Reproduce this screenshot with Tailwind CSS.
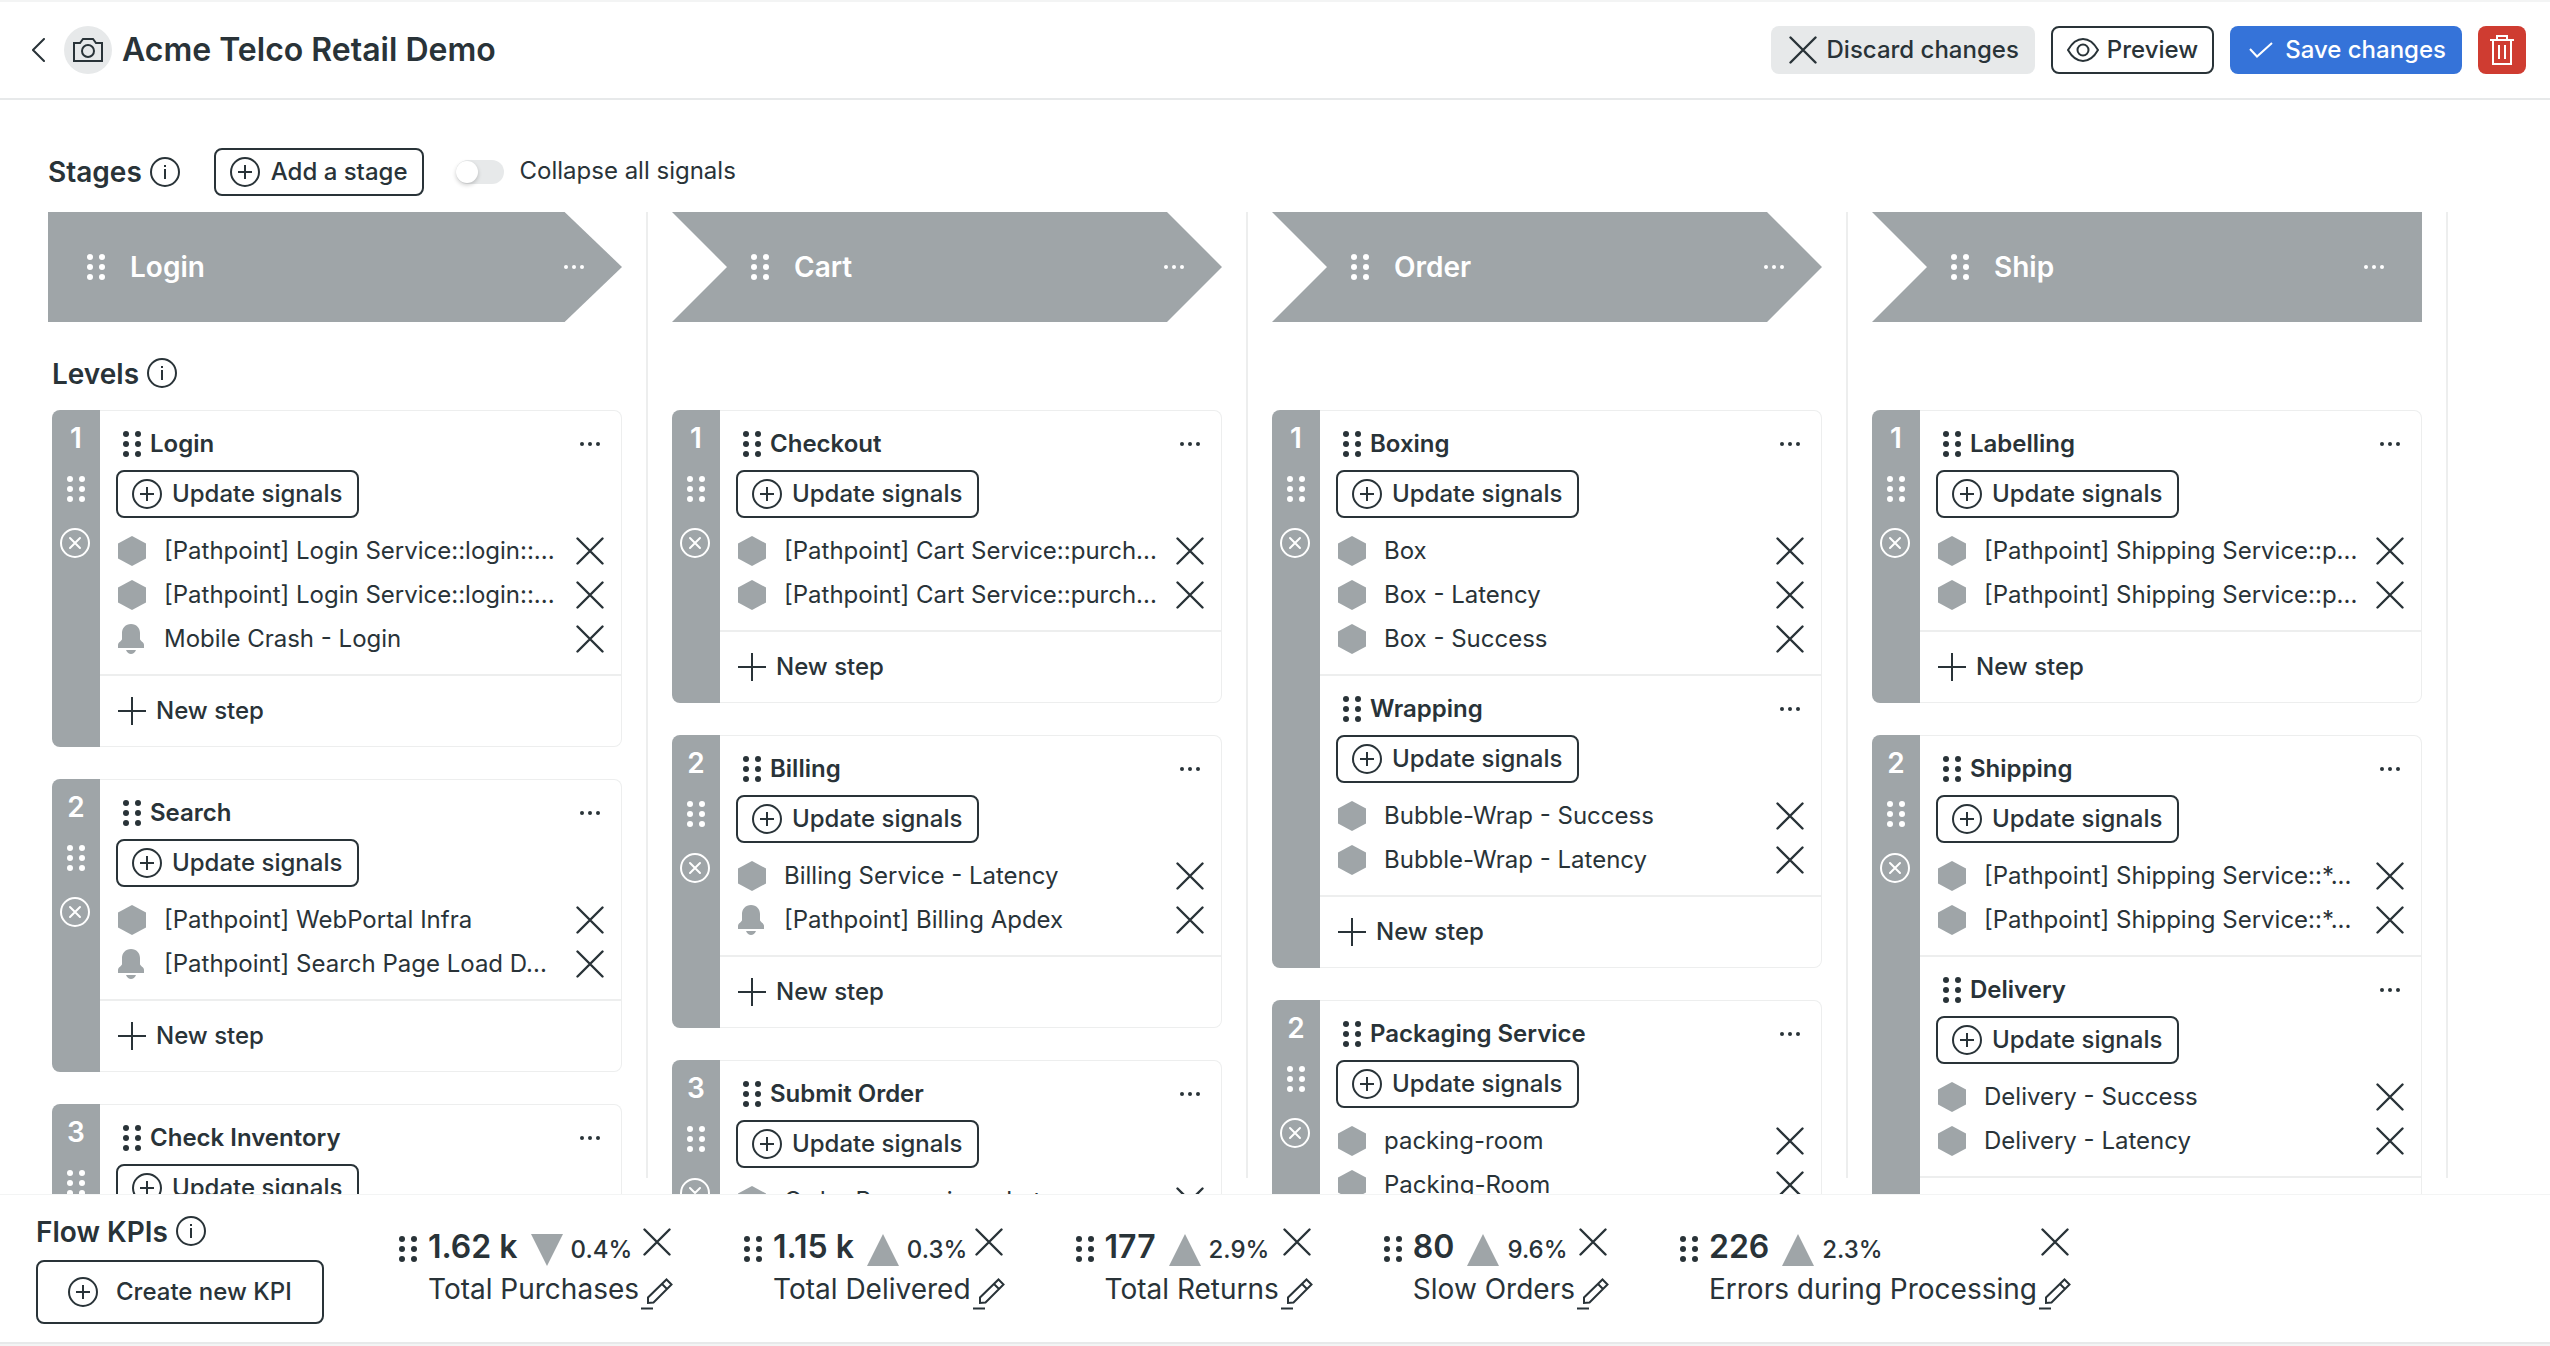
<!DOCTYPE html>
<html lang="en">
<head>
<meta charset="utf-8">
<title>Acme Telco Retail Demo</title>
<script src="https://cdn.jsdelivr.net/npm/@tailwindcss/browser@4"></script>
</head>
<body class="flex h-screen flex-col overflow-hidden bg-white font-['Inter',sans-serif] text-2xl text-[#293338]">

<svg class="hidden" aria-hidden="true">
  <symbol id="drag" viewBox="0 0 18 26"><g fill="currentColor"><circle cx="3" cy="3" r="3"/><circle cx="15" cy="3" r="3"/><circle cx="3" cy="13" r="3"/><circle cx="15" cy="13" r="3"/><circle cx="3" cy="23" r="3"/><circle cx="15" cy="23" r="3"/></g></symbol>
  <symbol id="more" viewBox="0 0 20 4"><g fill="currentColor"><circle cx="2" cy="2" r="2"/><circle cx="10" cy="2" r="2"/><circle cx="18" cy="2" r="2"/></g></symbol>
  <symbol id="plus-circle" viewBox="0 0 30 30"><g fill="none" stroke="currentColor" stroke-width="2"><circle cx="15" cy="15" r="14"/><path d="M15 8v14M8 15h14"/></g></symbol>
  <symbol id="x-circle" viewBox="0 0 30 30"><g fill="none" stroke="currentColor" stroke-width="2"><circle cx="15" cy="15" r="14"/><path d="M10 10l10 10M20 10L10 20" stroke-linecap="round"/></g></symbol>
  <symbol id="info" viewBox="0 0 30 30"><circle cx="15" cy="15" r="14" fill="none" stroke="currentColor" stroke-width="2"/><path d="M14 12h2v10h-2zM14 8h2v2h-2z" fill="currentColor"/></symbol>
  <symbol id="x" viewBox="0 0 28 28"><path d="M1.500 1.500l25 25M26.500 1.500l-25 25" fill="none" stroke="currentColor" stroke-width="2.400" stroke-linecap="round"/></symbol>
  <symbol id="plus" viewBox="0 0 28 28"><path d="M14 0v28M0 14h28" fill="none" stroke="currentColor" stroke-width="2"/></symbol>
  <symbol id="hexagon" viewBox="0 0 28 30"><path d="M14 0l14 7.500v15L14 30 0 22.500v-15z" fill="currentColor"/></symbol>
  <symbol id="bell" viewBox="0 0 28 30"><path d="M13 0c5.500 0 9 4 9 9v6c0 2 4 3 4 6v3H0v-3c0-3 4-4 4-6V9c0-5 3.500-9 9-9zM8 26h10c-1 2.600-3 4-5 4s-4-1.400-5-4z" fill="currentColor"/></symbol>
  <symbol id="pencil" viewBox="0 0 32 33"><path d="M7 25v-5.500L25.500 1.500l5 5L12.500 24.500zM21 6l5 5M0 30.500h12" fill="none" stroke="currentColor" stroke-width="2"/></symbol>
  <symbol id="up" viewBox="0 0 32 32"><path d="M16 0l16 32H0z" fill="currentColor"/></symbol>
  <symbol id="down" viewBox="0 0 32 32"><path d="M0 0h32L16 32z" fill="currentColor"/></symbol>
</svg>

<header class="flex h-[100px] shrink-0 items-center border-y-2 border-t-[#f3f4f4] border-b-[#e7e9ea] pr-6 pl-8">
  <a href="#" aria-label="Back" class="mr-[19px]"><svg class="h-6 w-[13px]" viewBox="0 0 13 24" fill="none" stroke="currentColor" stroke-width="2" stroke-linecap="round"><path d="M12 1L1 12l11 11"/></svg></a>
  <button aria-label="Change image" class="mr-2.5 flex size-12 items-center justify-center rounded-full bg-[#e7e9ea]">
    <svg class="h-6 w-[30px]" viewBox="0 0 30 24" fill="none" stroke="currentColor" stroke-width="2"><path d="M1 5h6l3-4h10l3 4h6v18H1z"/><circle cx="15" cy="13" r="6"/></svg>
  </button>
  <h1 class="text-[32px] leading-10 font-semibold">Acme Telco Retail Demo</h1>
  <div class="ml-auto flex gap-4">
    <button class="flex h-12 items-center gap-2.5 rounded-lg bg-[#e7e9ea] pr-4 pl-[18px] font-medium"><svg class="size-7"><use href="#x"/></svg>Discard changes</button>
    <button class="flex h-12 items-center gap-2 rounded-lg border-2 border-[#293338] px-3.5 font-medium"><svg class="h-6 w-8" viewBox="0 0 32 24" fill="none" stroke="currentColor" stroke-width="2"><path d="M1 12C5 5 10 1 16 1s11 4 15 11c-4 7-9 11-15 11S5 19 1 12z"/><circle cx="16" cy="12" r="5.500"/></svg>Preview</button>
    <button class="flex h-12 items-center gap-3 rounded-lg bg-[#3573d9] pr-4 pl-[19px] font-medium text-white"><svg class="h-4 w-6" viewBox="0 0 24 16" fill="none" stroke="currentColor" stroke-width="2"><path d="M1 7l7 7.500L23 1"/></svg>Save changes</button>
    <button aria-label="Delete" class="flex size-12 items-center justify-center rounded-lg bg-[#cf3c31] text-white"><svg class="h-[30px] w-6" viewBox="0 0 24 30" fill="none" stroke="currentColor" stroke-width="2"><path d="M0 5h24M7 5V1h10v4M3 5v24h18V5M9 10v14M15 10v14"/></svg></button>
  </div>
</header>

<main class="flex min-h-0 flex-1 flex-col overflow-hidden pt-12 pb-4 pl-12">
  <div class="flex h-12 shrink-0 items-center">
    <h2 class="text-[28px] leading-8 font-semibold">Stages</h2>
    <button aria-label="About stages" class="ml-2"><svg class="size-[30px]"><use href="#info"/></svg></button>
    <button class="ml-[34px] flex h-12 items-center gap-[11px] rounded-lg border-2 border-[#293338] px-3.5 font-medium"><svg class="size-[30px]"><use href="#plus-circle"/></svg>Add a stage</button>
    <input id="collapse" type="checkbox" class="ml-8 h-6 w-12 appearance-none rounded-full bg-[#e7e9ea] before:block before:size-[22px] before:translate-y-px before:rounded-full before:bg-white before:shadow-[0_2px_4px_rgba(0,0,0,0.2)] before:content-['']">
    <label for="collapse" class="ml-4 pb-0.5">Collapse all signals</label>
  </div>
  <div id="board" class="mt-4 flex min-h-0 flex-1"></div>
</main>

<footer class="flex shrink-0 items-start border-t border-[#f3f4f4] bg-white pt-[21px] pb-[18px] pl-9">
  <div class="mr-[75px] w-72 shrink-0">
    <div class="flex items-start gap-2">
      <h2 class="text-[28px] leading-8 font-semibold">Flow KPIs</h2>
      <button aria-label="About flow KPIs"><svg class="size-[30px]"><use href="#info"/></svg></button>
    </div>
    <button class="mt-3 flex h-16 w-full items-center gap-[18px] rounded-lg border-2 border-[#293338] px-[30px] font-medium"><svg class="size-[30px]"><use href="#plus-circle"/></svg>Create new KPI</button>
  </div>
  <ul id="kpis" class="flex gap-[71px] pt-2.5"></ul>
</footer>
<div class="h-1 shrink-0 border-t-2 border-[#e7e9ea] bg-[#f3f4f4]"></div>

<script>
  // A signal is [kind, name]: "h" is an entity, "b" an alert.
  const stages = [
    { name: 'Login', levels: [
      [{ name: 'Login', signals: [['h', '[Pathpoint] Login Service::login::...'], ['h', '[Pathpoint] Login Service::login::...'], ['b', 'Mobile Crash - Login']] }],
      [{ name: 'Search', signals: [['h', '[Pathpoint] WebPortal Infra'], ['b', '[Pathpoint] Search Page Load D...']] }],
      [{ name: 'Check Inventory', signals: [] }]
    ] },
    { name: 'Cart', levels: [
      [{ name: 'Checkout', signals: [['h', '[Pathpoint] Cart Service::purch...'], ['h', '[Pathpoint] Cart Service::purch...']] }],
      [{ name: 'Billing', signals: [['h', 'Billing Service - Latency'], ['b', '[Pathpoint] Billing Apdex']] }],
      [{ name: 'Submit Order', signals: [['h', 'Order Processing - Latency']] }]
    ] },
    { name: 'Order', levels: [
      [{ name: 'Boxing', signals: [['h', 'Box'], ['h', 'Box - Latency'], ['h', 'Box - Success']] },
       { name: 'Wrapping', signals: [['h', 'Bubble-Wrap - Success'], ['h', 'Bubble-Wrap - Latency']] }],
      [{ name: 'Packaging Service', signals: [['h', 'packing-room'], ['h', 'Packing-Room']] }]
    ] },
    { name: 'Ship', levels: [
      [{ name: 'Labelling', signals: [['h', '[Pathpoint] Shipping Service::p...'], ['h', '[Pathpoint] Shipping Service::p...']] }],
      [{ name: 'Shipping', signals: [['h', '[Pathpoint] Shipping Service::*...'], ['h', '[Pathpoint] Shipping Service::*...']] },
       { name: 'Delivery', signals: [['h', 'Delivery - Success'], ['h', 'Delivery - Latency']] }]
    ] }
  ];
  const kpis = [
    ['1.62 k', 'down', '0.4%', 'Total Purchases'],
    ['1.15 k', 'up', '0.3%', 'Total Delivered'],
    ['177', 'up', '2.9%', 'Total Returns'],
    ['80', 'up', '9.6%', 'Slow Orders'],
    ['226', 'up', '2.3%', 'Errors during Processing']
  ];

  const signal = ([kind, name]) => `
    <li class="flex h-11 items-center">
      <svg class="mr-[18px] h-[30px] w-7 shrink-0 text-[#9fa5a8]"><use href="#${kind === 'h' ? 'hexagon' : 'bell'}"/></svg>
      <span class="flex-1 whitespace-nowrap">${name}</span>
      <button aria-label="Remove signal"><svg class="size-7"><use href="#x"/></svg></button>
    </li>`;

  const step = s => `
    <section class="border-b-2 border-[#edeeee] pt-4 pb-[13px]">
      <div class="mb-[9px] flex h-[34px] items-center pr-[21px] pl-[23px]">
        <svg class="mr-[9px] h-[26px] w-[18px]"><use href="#drag"/></svg>
        <h3 class="font-semibold">${s.name}</h3>
        <button aria-label="Step menu" class="ml-auto flex h-6 items-center"><svg class="h-1 w-5"><use href="#more"/></svg></button>
      </div>
      <button class="ml-4 flex h-12 items-center gap-2.5 rounded-lg border-2 border-[#293338] pr-[15px] pl-3.5 font-medium"><svg class="size-[30px]"><use href="#plus-circle"/></svg>Update signals</button>
      <ul class="mt-[11px] pr-[17px] pl-[18px]">${s.signals.map(signal).join('')}</ul>
    </section>`;

  const level = (steps, i, all) => `
    <article class="flex">
      <div class="flex w-12 shrink-0 flex-col items-center rounded-l-lg bg-[#9fa5a8] pt-3 text-white">
        <span class="text-[28px] leading-8 font-semibold">${i + 1}</span>
        <svg class="mt-[22px] h-[26px] w-[18px]"><use href="#drag"/></svg>
        <button aria-label="Remove level" class="mt-[26px] mr-0.5"><svg class="size-[30px]"><use href="#x-circle"/></svg></button>
      </div>
      <div class="flex-1 rounded-r-lg border border-l-0 border-[#edeeee]">
        ${steps.map(step).join('')}
        ${i < all.length - 1
          ? '<button class="flex h-[70px] items-center gap-2.5 pl-[18px] font-medium"><svg class="size-7"><use href="#plus"/></svg>New step</button>'
          : '<div class="h-[70px]"></div>'}
      </div>
    </article>`;

  const shapes = {
    first: 'pl-[39px] [clip-path:polygon(0_0,90%_0,100%_50%,90%_100%,0_100%)]',
    middle: 'pl-[79px] [clip-path:polygon(0_0,90%_0,100%_50%,90%_100%,0_100%,10%_50%)]',
    last: 'pl-[79px] [clip-path:polygon(0_0,100%_0,100%_100%,0_100%,10%_50%)]'
  };

  document.getElementById('board').innerHTML = stages.map((st, i) => {
    const shape = i === 0 ? shapes.first : i === stages.length - 1 ? shapes.last : shapes.middle;
    return `
    <div class="w-[600px] shrink-0 border-r-2 border-[#edeeee] pr-6 ${i ? 'pl-6' : ''}">
      <div class="flex h-[110px] items-center bg-[#9fa5a8] pr-[38px] text-white ${shape}">
        <svg class="mr-[25px] h-[26px] w-[18px]"><use href="#drag"/></svg>
        <h2 class="text-[28px] leading-8 font-semibold">${st.name}</h2>
        <button aria-label="Stage menu" class="ml-auto flex h-6 items-center"><svg class="h-1 w-5"><use href="#more"/></svg></button>
      </div>
      <div class="flex h-[88px] items-start gap-2 pt-9 ${i ? '' : 'pl-1'}">
        ${i ? '' : '<h2 class="text-[28px] leading-8 font-semibold">Levels</h2><button aria-label="About levels"><svg class="size-[30px]"><use href="#info"/></svg></button>'}
      </div>
      <div class="flex flex-col gap-8 ${i ? '' : 'pl-1'}">${st.levels.map(level).join('')}</div>
    </div>`;
  }).join('');

  document.getElementById('kpis').innerHTML = kpis.map(([value, dir, pct, name]) => `
    <li class="flex items-start">
      <svg class="mt-2.5 mr-[11px] h-[26px] w-[18px]"><use href="#drag"/></svg>
      <div>
        <div class="flex h-10 items-baseline">
          <span class="mr-[13px] text-[32px] leading-[42px] font-semibold">${value}</span>
          <svg class="mr-2 size-8 self-end text-[#9fa5a8]"><use href="#${dir}"/></svg>
          <span class="font-medium">${pct}</span>
        </div>
        <div class="mt-1 text-[28px] leading-[38px]">${name}</div>
      </div>
      <div class="ml-0.5 flex flex-col items-center gap-[22px] pt-0.5">
        <button aria-label="Remove KPI"><svg class="size-7"><use href="#x"/></svg></button>
        <button aria-label="Edit KPI"><svg class="h-[33px] w-8"><use href="#pencil"/></svg></button>
      </div>
    </li>`).join('');
</script>
</body>
</html>
